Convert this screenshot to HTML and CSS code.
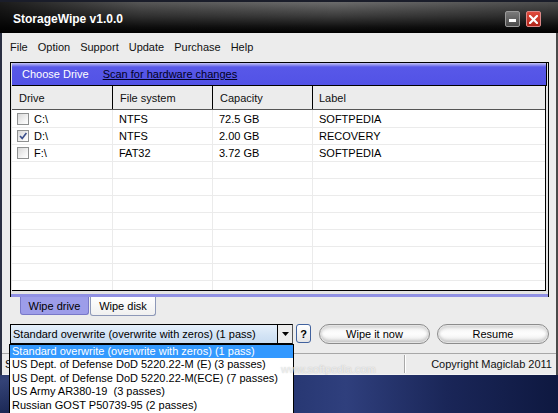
FILE: index.html
```html
<!DOCTYPE html>
<html>
<head>
<meta charset="utf-8">
<title>StorageWipe v1.0.0</title>
<link rel="stylesheet" href="styles.css">
</head>
<body>
<div class="desktop">
  <div class="window">
    <div class="titlebar">
      <span class="title">StorageWipe v1.0.0</span>
      <div class="tb-buttons">
        <span class="tb-btn tb-min"><span class="min-bar"></span></span>
        <span class="tb-btn tb-close">
          <svg width="9" height="9" viewBox="0 0 9 9"><path d="M1 1L8 8M8 1L1 8" stroke="#fff" stroke-width="2.2" stroke-linecap="square"/></svg>
        </span>
      </div>
    </div>
    <nav class="menu">
      <span>File</span><span>Option</span><span>Support</span><span>Update</span><span>Purchase</span><span>Help</span>
    </nav>
    <div class="main">
      <div class="panel">
        <div class="panel-head">
          <span class="choose">Choose Drive</span>
          <span class="scan">Scan for hardware changes</span>
        </div>
        <div class="table">
          <div class="thead">
            <div class="th">Drive</div><div class="th">File system</div><div class="th">Capacity</div><div class="th last">Label</div>
          </div>
          <div class="tbody">
            <div class="tr">
              <div class="td"><span class="cb"></span>C:\</div><div class="td">NTFS</div><div class="td">72.5 GB</div><div class="td last">SOFTPEDIA</div>
            </div>
            <div class="tr">
              <div class="td"><span class="cb"><svg width="10" height="10" viewBox="0 0 10 10"><path d="M2 5L4.2 7.4L8.4 2" fill="none" stroke="#3b4f8c" stroke-width="1.6"/></svg></span>D:\</div><div class="td">NTFS</div><div class="td">2.00 GB</div><div class="td last">RECOVERY</div>
            </div>
            <div class="tr">
              <div class="td"><span class="cb"></span>F:\</div><div class="td">FAT32</div><div class="td">3.72 GB</div><div class="td last">SOFTPEDIA</div>
            </div>
            <div class="tr"><div class="td"></div><div class="td"></div><div class="td"></div><div class="td last"></div></div>
            <div class="tr"><div class="td"></div><div class="td"></div><div class="td"></div><div class="td last"></div></div>
            <div class="tr"><div class="td"></div><div class="td"></div><div class="td"></div><div class="td last"></div></div>
            <div class="tr"><div class="td"></div><div class="td"></div><div class="td"></div><div class="td last"></div></div>
            <div class="tr"><div class="td"></div><div class="td"></div><div class="td"></div><div class="td last"></div></div>
            <div class="tr"><div class="td"></div><div class="td"></div><div class="td"></div><div class="td last"></div></div>
            <div class="tr"><div class="td"></div><div class="td"></div><div class="td"></div><div class="td last"></div></div>
            <div class="tr"><div class="td"></div><div class="td"></div><div class="td"></div><div class="td last"></div></div>
          </div>
        </div>
        <div class="band"></div>
      </div>
      <div class="tabs">
        <span class="tab active">Wipe drive</span>
        <span class="tab">Wipe disk</span>
      </div>
      <div class="controls">
        <div class="combo">
          <span class="combo-text">Standard overwrite (overwrite with zeros) (1 pass)</span>
          <span class="combo-arrow"><svg width="7" height="4" viewBox="0 0 7 4"><path d="M0 0H7L3.5 4Z" fill="#000"/></svg></span>
        </div>
        <span class="help">?</span>
        <span class="pill wipe">Wipe it now</span>
        <span class="pill resume">Resume</span>
      </div>
    </div>
    <div class="statusbar">
      <span class="status-left">S</span>
      <span class="status-sep"></span>
      <span class="status-right">Copyright Magiclab 2011</span>
    </div>
  </div>
  <div class="dropdown">
    <div class="opt sel">Standard overwrite (overwrite with zeros) (1 pass)</div>
    <div class="opt">US Dept. of Defense DoD 5220.22-M (E) (3 passes)</div>
    <div class="opt">US Dept. of Defense DoD 5220.22-M(ECE) (7 passes)</div>
    <div class="opt">US Army AR380-19&nbsp; (3 passes)</div>
    <div class="opt">Russian GOST P50739-95 (2 passes)</div>
  </div>
  <div class="wm-small">www.softpedia.com</div>
</div>
</body>
</html>
```

FILE: styles.css
```css
* { box-sizing: border-box; }
html, body {
  margin: 0;
  padding: 0;
  width: 558px;
  height: 413px;
  overflow: hidden;
}
body {
  font-family: "Liberation Sans", Arial, sans-serif;
  font-size: 11px;
  color: #000;
}
.desktop {
  position: relative;
  width: 558px;
  height: 413px;
  overflow: hidden;
  background:
    linear-gradient(160deg, transparent 55%, rgba(120,140,210,0.35) 62%, transparent 70%),
    linear-gradient(175deg, transparent 40%, rgba(90,110,190,0.35) 60%, transparent 80%),
    linear-gradient(90deg, #0f1b45 0%, #1e2e66 40%, #2f3f7d 62%, #1a2658 80%, #0e1840 100%);
}
.window {
  width: 558px;
  height: 375px;
  background: #ececec;
  border-left: 2px solid #2a2f42;
  border-right: 2px solid #4a4a4a;
  display: flex;
  flex-direction: column;
}

/* title bar */
.titlebar {
  height: 33px;
  flex: none;
  margin: 0 -2px;
  display: flex;
  align-items: center;
  justify-content: space-between;
  padding: 0 17px 0 13px;
  border-top: 2px solid #1a1d2a;
  background:
    linear-gradient(90deg, rgba(0,0,0,0.75) 0%, rgba(0,0,0,0.2) 25%, rgba(0,0,0,0) 60%, rgba(0,0,0,0.3) 100%),
    linear-gradient(180deg, #6c6c6c 0%, #3c3c3c 45%, #111 80%, #000 100%);
}
.title {
  color: #fff;
  font-weight: bold;
  font-size: 12px;
  padding-top: 2px;
}
.tb-buttons {
  display: flex;
  gap: 6px;
  padding-top: 3px;
}
.tb-btn {
  width: 15px;
  height: 16px;
  border-radius: 2px;
  display: flex;
  align-items: center;
  justify-content: center;
}
.tb-min {
  background: linear-gradient(180deg, #7a7a7a, #4a4a4a);
  border: 1px solid #9a9a9a;
  align-items: flex-end;
  padding-bottom: 4px;
}
.min-bar {
  width: 7px;
  height: 3px;
  background: #fff;
}
.tb-close {
  background: linear-gradient(180deg, #e04a3c, #b02418);
  border: 1px solid #d88;
}

/* menu */
.menu {
  height: 27px;
  flex: none;
  display: flex;
  align-items: center;
  gap: 10px;
  padding: 1px 0 0 8px;
}
.menu span { color: #111; }

/* main */
.main {
  padding: 2px 7px 0 8px;
  flex: none;
}
.panel {
  border: 1px solid #000;
  border-bottom: none;
  padding: 0 1px;
  background: #e4e4e4;
}
.panel-head {
  height: 23px;
  display: flex;
  align-items: center;
  gap: 14px;
  padding: 0 0 0 10px;
  border-right: 1px solid #000;
  border-bottom: 1px solid #000;
  background: linear-gradient(180deg, #c4c4f6 0px, #9090ee 2px, #5858e8 4px, #5252e6 100%);
}
.choose { color: #fff; }
.scan { color: #000022; text-decoration: underline; }

.table {
  background: #fff;
  border-right: 1px solid #000;
  border-bottom: 1px solid #000;
  margin-right: 1px;
}
.thead {
  display: grid;
  grid-template-columns: 101px 100px 100px 1fr;
  height: 24px;
  background: #ececec;
  border-bottom: 1px solid #555;
}
.th {
  display: flex;
  align-items: center;
  padding-left: 7px;
  border-right: 1px solid #000;
  color: #111;
}
.th.last { border-right: none; padding-left: 6px; }
.tbody {
  height: 180px;
  overflow: hidden;
}
.tr {
  display: grid;
  grid-template-columns: 101px 100px 100px 1fr;
  height: 17px;
  border-bottom: 1px solid #ebebeb;
}
.tr:first-child { height: 18px; }
.td {
  display: flex;
  align-items: center;
  padding-left: 6px;
  border-right: 1px solid #ebebeb;
  white-space: nowrap;
}
.td.last { border-right: none; }
.cb {
  width: 12px;
  height: 12px;
  border: 1px solid #8e9090;
  background: linear-gradient(135deg, #d8d8d8, #f6f6f6 70%, #fff);
  margin: 0 5px 0 -1px;
  display: flex;
  align-items: center;
  justify-content: center;
}
.band {
  margin-top: 3px;
  height: 3px;
  margin-left: -1px;
  margin-right: -1px;
  background: #9090e4;
}

/* tabs */
.tabs {
  height: 19px;
  display: flex;
  align-items: flex-start;
  padding-left: 10px;
}
.tab {
  height: 19px;
  width: 66px;
  display: flex;
  align-items: center;
  justify-content: center;
  white-space: nowrap;
  border: 1px solid #8d98b8;
  border-top: none;
  border-radius: 0 0 3px 3px;
  background: linear-gradient(180deg, #ffffff, #f0f0f0);
}
.tab.active {
  height: 18px;
  width: 69px;
  background: #9d9de9;
  border-color: #7878c8;
  margin-right: 1px;
}

/* controls */
.controls {
  margin-top: 8px;
  height: 20px;
  display: flex;
  align-items: flex-start;
}
.combo {
  width: 283px;
  height: 20px;
  display: flex;
  border: 1px solid #000;
  border-right: 1px solid #555;
  background: linear-gradient(180deg, #e6f0fb 0%, #d2e3f5 60%, #c9dcf1 100%);
}
.combo-text {
  flex: 1;
  display: flex;
  align-items: center;
  padding-left: 2px;
  white-space: nowrap;
}
.combo-arrow {
  width: 15px;
  display: flex;
  align-items: center;
  justify-content: center;
  border-left: 1px solid #000;
  background: #ececec;
}
.help {
  margin-left: 3px;
  width: 15px;
  height: 19px;
  border: 1px solid #41629e;
  border-radius: 3px;
  background: linear-gradient(180deg, #fff, #e6e6e6);
  font-weight: bold;
  display: flex;
  align-items: center;
  justify-content: center;
  font-size: 11px;
}
.pill {
  height: 20px;
  border-radius: 10px;
  border: 1px solid #8c8c8c;
  box-shadow: inset 0 0 0 1px #e4e4e4, inset 0 -3px 3px #c8c8c8, inset 0 3px 3px #d6d6d6;
  background: linear-gradient(180deg, #f2f2f2, #fdfdfd 50%, #eaeaea);
  display: flex;
  align-items: center;
  justify-content: center;
}
.wipe { margin-left: 8px; width: 111px; }
.resume { margin-left: 7px; width: 112px; }

/* status bar */
.statusbar {
  margin-top: 9px;
  height: 22px;
  flex: none;
  border-top: 1px solid #a8a8a8;
  border-bottom: 1px solid #f4f4f4;
  display: flex;
  align-items: center;
  padding: 0 4px 0 3px;
}
.status-left { width: 399px; }
.status-sep {
  width: 2px;
  height: 18px;
  border-left: 1px solid #a8a8a8;
  border-right: 1px solid #fff;
}
.status-right {
  flex: 1;
  text-align: right;
  color: #111;
}

/* dropdown overlay */
.dropdown {
  position: absolute;
  left: 9px;
  top: 344px;
  width: 285px;
  height: 80px;
  border: 1px solid #000;
  background: #fff;
}
.opt {
  height: 13.4px;
  line-height: 13px;
  padding-left: 2px;
  white-space: nowrap;
}
.opt.sel {
  background: #3399ff;
  color: #fff;
}

/* watermark overlay */
.wm-small {
  position: absolute;
  left: 281px;
  top: 363px;
  font-size: 11px;
  color: rgba(255,255,255,0.7);
  text-shadow: 0 0 1px rgba(120,120,120,0.5);
  pointer-events: none;
}
```
